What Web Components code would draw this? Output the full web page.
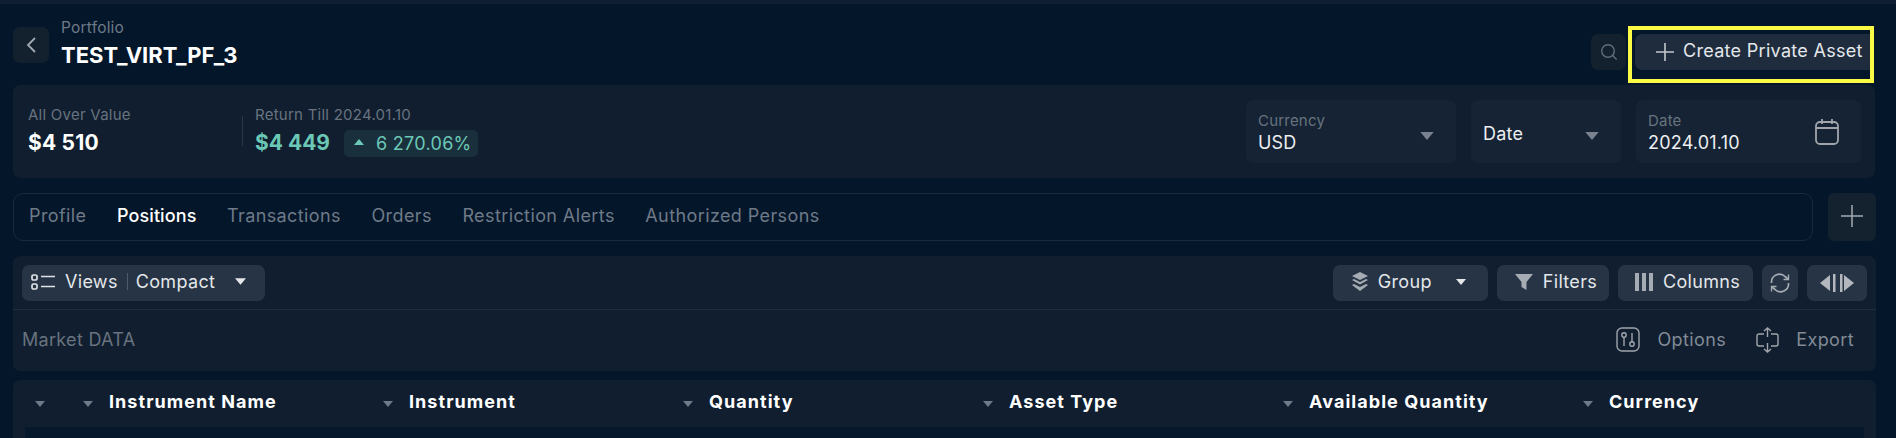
<!DOCTYPE html>
<html lang="en">
<head>
<meta charset="utf-8">
<title>Portfolio</title>
<style>
  html, body { margin: 0; background: #03162a; }
  body { font-family: "Inter", "Liberation Sans", sans-serif; color: #fff; height: 438px; overflow: hidden; }
</style>
</head>
<body>
<portfolio-page></portfolio-page>

<script>
const caret = (size = 10, color = "#6f7a88") =>
  `<svg width="${size}" height="${Math.round(size * 0.6)}" viewBox="0 0 10 6"><path d="M0 0h10L5 6z" fill="${color}"/></svg>`;

/* PAGE HEADER */
class PageHeader extends HTMLElement {
  constructor() {
    super();
    this.attachShadow({ mode: "open" }).innerHTML = `
      <style>
        :host { display: flex; justify-content: space-between; align-items: flex-start; height: 81px; padding: 0 26px 0 13px; box-sizing: border-box; }
        .left { display: flex; gap: 12px; margin-top: 23px; }
        .back { width: 36px; height: 36px; border-radius: 7px; background: #13212f; display: flex; align-items: center; justify-content: center; }
        .sub { font-size: 15.5px; line-height: 18px; color: #6f7a88; letter-spacing: .2px; margin-top: -8px; }
        .title { font-size: 22px; line-height: 26px; font-weight: 700; margin-top: 5px; }
        .right { display: flex; gap: 9px; margin-top: 30px; }
        .search { width: 35px; height: 36px; border-radius: 7px; background: #13212f; display: flex; align-items: center; justify-content: center; }
        .create { position: relative; width: 235px; height: 36px; border-radius: 7px 0 0 7px; background: #1e2c3e; display: flex; align-items: center; gap: 9px; padding: 0 0 4px 21px; box-sizing: border-box; font-size: 18px; letter-spacing: .3px; color: #e4e7ea; white-space: nowrap; }
        .create svg { margin-top: 4px; }
        .mark { position: absolute; left: -7px; right: -4px; top: -8px; bottom: -13px; border: 4px solid #fbfb45; pointer-events: none; }
      </style>
      <div class="left">
        <div class="back"><svg width="12" height="18" viewBox="0 0 12 18"><path d="M10 2 3 9l7 7" fill="none" stroke="#a3a9b1" stroke-width="1.8"/></svg></div>
        <div>
          <div class="sub"><slot name="sub"></slot></div>
          <div class="title"><slot name="title"></slot></div>
        </div>
      </div>
      <div class="right">
        <div class="search"><svg width="18" height="18" viewBox="0 0 18 18"><circle cx="8" cy="8" r="6.3" fill="none" stroke="#626d7a" stroke-width="1.4"/><path d="m12.6 12.6 4 4" stroke="#626d7a" stroke-width="1.4"/></svg></div>
        <div class="create">
          <svg width="18" height="18" viewBox="0 0 18 18"><path d="M9 0v18M0 9h18" stroke="#c3c7cc" stroke-width="1.6"/></svg>
          <slot name="action"></slot>
          <span class="mark"></span>
        </div>
      </div>`;
  }
}
customElements.define("page-header", PageHeader);

/* STATS */
class StatBar extends HTMLElement {
  constructor() {
    super();
    this.attachShadow({ mode: "open" }).innerHTML = `
      <style>
        :host { display: flex; justify-content: space-between; align-items: center; height: 93px; margin: 0 21px 0 13px; padding: 0 14px 0 15px; box-sizing: border-box; border-radius: 7px; background: #101e2f; }
        .stats, .fields { display: flex; align-items: center; }
        .fields { gap: 15px; }
      </style>
      <div class="stats"><slot></slot></div>
      <div class="fields"><slot name="fields"></slot></div>`;
  }
}
customElements.define("stat-bar", StatBar);

class StatItem extends HTMLElement {
  constructor() {
    super();
    this.attachShadow({ mode: "open" }).innerHTML = `
      <style>
        :host { display: block; box-sizing: border-box; }
        :host([divided]) { position: relative; padding-left: 13px; }
        :host([divided])::before { content: ""; position: absolute; left: 0; top: 9px; height: 30px; width: 1px; background: #2a3748; }
        .label { font-size: 15px; line-height: 20px; color: #68737f; letter-spacing: .25px; white-space: nowrap; margin-top: -2px; }
        .row { display: flex; align-items: center; gap: 14px; margin-top: 5px; height: 27px; }
        .value { font-size: 21px; font-weight: 700; letter-spacing: .2px; white-space: nowrap; margin-top: -1px; }
        :host([up]) .value { color: #6bc8b7; letter-spacing: 0; }
      </style>
      <div class="label"><slot name="label"></slot></div>
      <div class="row"><span class="value"><slot name="value"></slot></span><slot name="badge"></slot></div>`;
  }
}
customElements.define("stat-item", StatItem);

class ChangeBadge extends HTMLElement {
  constructor() {
    super();
    this.attachShadow({ mode: "open" }).innerHTML = `
      <style>
        :host { display: inline-flex; align-items: center; gap: 12px; height: 27px; padding: 0 6px 0 10px; border-radius: 5px; background: #1a2f3c; color: #6bc8b7; font-size: 18px; letter-spacing: .3px; white-space: nowrap; }
        svg { margin-top: -2px; }
      </style>
      <svg width="10" height="6" viewBox="0 0 10 6"><path d="M0 6h10L5 0z" fill="#6bc8b7"/></svg><slot></slot>`;
  }
}
customElements.define("change-badge", ChangeBadge);

class SelectField extends HTMLElement {
  constructor() {
    super();
    this.attachShadow({ mode: "open" }).innerHTML = `
      <style>
        :host { display: flex; align-items: center; justify-content: space-between; height: 63px; box-sizing: border-box; padding: 0 22px 0 12px; border-radius: 7px; background: #152334; }
        .text { display: flex; flex-direction: column; padding-top: 4px; }
        .label { font-size: 15px; line-height: 19px; color: #68737f; letter-spacing: .2px; margin-top: -2px; margin-bottom: 2px; }
        .label:empty { display: none; }
        .value { font-size: 18px; line-height: 22px; color: #eceef0; letter-spacing: .2px; }
        .tail { display: block; margin-top: 5px; }
        ::slotted(svg) { display: block; margin-top: -5px; }
      </style>
      <div class="text"><div class="label"></div><div class="value"><slot></slot></div></div>
      <div class="tail"><slot name="icon">${caret(14, "#79828e")}</slot></div>`;
    this.shadowRoot.querySelector(".label").textContent = this.getAttribute("label") || "";
    this.style.width = this.getAttribute("w") + "px";
  }
}
customElements.define("select-field", SelectField);

/* TABS */
class TabBar extends HTMLElement {
  constructor() {
    super();
    this.attachShadow({ mode: "open" }).innerHTML = `
      <style>
        :host { display: flex; gap: 15px; height: 48px; margin: 15px 20px 0 13px; }
        .tabs { flex: 1; display: flex; align-items: center; gap: 30.5px; padding: 0 0 4px 15px; border: 1px solid #1b2a3b; border-radius: 10px; }
        .add { width: 48px; height: 48px; padding-bottom: 2px; box-sizing: border-box; border-radius: 6px; background: #14222f; display: flex; align-items: center; justify-content: center; }
      </style>
      <div class="tabs"><slot></slot></div>
      <div class="add"><svg width="22" height="22" viewBox="0 0 22 22"><path d="M11 0v22M0 11h22" stroke="#a3a9b1" stroke-width="1.5"/></svg></div>`;
  }
}
customElements.define("tab-bar", TabBar);

class TabItem extends HTMLElement {
  constructor() {
    super();
    this.attachShadow({ mode: "open" }).innerHTML = `
      <style>
        :host { display: block; font-size: 18px; color: #6f7a88; letter-spacing: .4px; white-space: nowrap; }
        :host([active]) { color: #fff; font-weight: 500; letter-spacing: .1px; }
      </style><slot></slot>`;
  }
}
customElements.define("tab-item", TabItem);

/* TOOLBAR */
class ToolPanel extends HTMLElement {
  constructor() {
    super();
    this.attachShadow({ mode: "open" }).innerHTML = `
      <style>
        :host { display: block; margin: 15px 20px 0 13px; height: 115px; border-radius: 7px; background: #101e2f; }
        .top { display: flex; justify-content: space-between; align-items: center; height: 54px; padding: 0 9px; box-sizing: border-box; border-bottom: 1px solid #1f2d3e; }
        .bottom { display: flex; justify-content: space-between; align-items: center; height: 61px; padding: 0 22px 2px 9px; box-sizing: border-box; font-size: 18px; color: #68737f; letter-spacing: .3px; }
        .group { display: flex; align-items: center; gap: 9px; }
        .links { display: flex; align-items: center; gap: 30px; }
      </style>
      <div class="top"><slot name="views"></slot><div class="group"><slot name="tools"></slot></div></div>
      <div class="bottom"><slot name="caption"></slot><div class="links"><slot name="links"></slot></div></div>`;
  }
}
customElements.define("tool-panel", ToolPanel);

class ToolButton extends HTMLElement {
  constructor() {
    super();
    this.attachShadow({ mode: "open" }).innerHTML = `
      <style>
        :host { display: inline-flex; align-items: center; gap: 10px; height: 36px; box-sizing: border-box; padding: 0 12px 2px 18px; border-radius: 7px; background: #263445; color: #e4e7ea; font-size: 18px; letter-spacing: .3px; white-space: nowrap; }
        :host([icon-only]) { padding: 0; justify-content: center; }
      </style><slot></slot>`;
  }
}
customElements.define("tool-button", ToolButton);

class LinkButton extends HTMLElement {
  constructor() {
    super();
    this.attachShadow({ mode: "open" }).innerHTML = `
      <style>
        :host { display: inline-flex; align-items: center; gap: 17px; font-size: 18px; color: #818a95; letter-spacing: .4px; white-space: nowrap; }
      </style><slot></slot>`;
  }
}
customElements.define("link-button", LinkButton);

/* TABLE */
class TableHead extends HTMLElement {
  constructor() {
    super();
    this.attachShadow({ mode: "open" }).innerHTML = `
      <style>
        :host { display: block; margin: 9px 20px 0 13px; height: 60px; border-radius: 7px 7px 0 0; background: #101e2f; padding: 0 12px; box-sizing: border-box; }
        .row { display: grid; grid-template-columns: 48px 300px 300px 300px 300px 300px 1fr; align-items: center; height: 47px; box-sizing: border-box; padding-bottom: 5px; }
        .body { height: 13px; background: #06182c; }
      </style>
      <div class="row"><slot></slot></div>
      <div class="body"></div>`;
  }
}
customElements.define("table-head", TableHead);

class HeadCell extends HTMLElement {
  constructor() {
    super();
    this.attachShadow({ mode: "open" }).innerHTML = `
      <style>
        :host { display: flex; align-items: center; gap: 16px; padding-left: 10px; font-size: 18px; font-weight: 700; letter-spacing: 1.05px; white-space: nowrap; }
        svg { margin-top: 5px; }
      </style>${caret(10)}<slot></slot>`;
  }
}
customElements.define("head-cell", HeadCell);

/* PAGE */
class PortfolioPage extends HTMLElement {
  constructor() {
    super();
    this.attachShadow({ mode: "open" }).innerHTML = `
      <style>
        :host { display: block; }
        .strip { height: 4px; background: #0f1e30; }
        svg { display: block; flex: none; }
        .sep { display: inline-block; width: 1px; height: 17px; background: #4e5a69; margin: 0 -2px 0 -1px; }
      </style>
      <div class="strip"></div>

      <page-header>
        <span slot="sub">Portfolio</span>
        <span slot="title">TEST_VIRT_PF_3</span>
        <span slot="action">Create Private Asset</span>
      </page-header>

      <stat-bar>
        <stat-item style="width:214px">
          <span slot="label">All Over Value</span>
          <span slot="value">$4 510</span>
        </stat-item>
        <stat-item divided up>
          <span slot="label">Return Till 2024.01.10</span>
          <span slot="value">$4 449</span>
          <change-badge slot="badge">6 270.06%</change-badge>
        </stat-item>
        <select-field slot="fields" label="Currency" w="210">USD</select-field>
        <select-field slot="fields" w="150">Date</select-field>
        <select-field slot="fields" label="Date" w="225">2024.01.10
          <svg slot="icon" width="24" height="26" viewBox="0 0 24 26" fill="none" stroke="#a0a5ac" stroke-width="1.8"><rect x="1" y="3" width="22" height="22" rx="4"/><path d="M1 9h22M7 0v5M17 0v5"/></svg>
        </select-field>
      </stat-bar>

      <tab-bar>
        <tab-item>Profile</tab-item>
        <tab-item active>Positions</tab-item>
        <tab-item>Transactions</tab-item>
        <tab-item>Orders</tab-item>
        <tab-item>Restriction Alerts</tab-item>
        <tab-item>Authorized Persons</tab-item>
      </tab-bar>

      <tool-panel>
        <tool-button slot="views" style="padding-left:9px;width:243px">
          <svg width="24" height="16" viewBox="0 0 24 16" fill="none" stroke="#dfe2e5" stroke-width="1.7"><rect x="1" y="1" width="5" height="5" rx="1.6"/><rect x="1" y="10" width="5" height="5" rx="1.6"/><path d="M10 2.500h14M10 12.500h14"/></svg>
          <span>Views</span><span class="sep"></span><span style="letter-spacing:.35px">Compact</span>
          <span style="margin-left:10px">${caret(11, "#e4e7ea")}</span>
        </tool-button>

        <tool-button slot="tools" style="width:155px;padding-left:19px">
          <svg width="16" height="20" viewBox="0 0 16 20" fill="#a6acb3"><path d="M8 0l8 4-8 4-8-4z"/><path d="M0 8l2-1 6 3 6-3 2 1-8 4.500z"/><path d="M0 13l2-1 6 3 6-3 2 1-8 6z"/></svg>
          <span>Group</span>
          <span style="margin-left:14px">${caret(10, "#e4e7ea")}</span>
        </tool-button>
        <tool-button slot="tools">
          <svg width="18" height="18" viewBox="0 0 18 18" fill="#a6acb3"><path d="M0 1h18l-6.500 8v8l-5-3V9z"/></svg>
          <span>Filters</span>
        </tool-button>
        <tool-button slot="tools" style="padding-left:17px;padding-right:13px">
          <svg width="18" height="18" viewBox="0 0 18 18" fill="#a6acb3"><rect x="0" y="0" width="4" height="18"/><rect x="7" y="0" width="4" height="18"/><rect x="14" y="0" width="4" height="18"/></svg>
          <span>Columns</span>
        </tool-button>
        <tool-button slot="tools" icon-only style="width:36px">
          <svg width="20" height="20" viewBox="0 0 20 20" fill="none" stroke="#a6acb3" stroke-width="1.7"><path d="M1.500 10A8 8 0 0 1 15 3.500L18 6"/><path d="M18.500 10A8 8 0 0 1 5 16.500L2 14"/><path d="M18.500 1.500V6.500H13.500M1.500 18.500V13.500H6.500" stroke-width="1.300"/></svg>
        </tool-button>
        <tool-button slot="tools" icon-only style="width:60px">
          <svg width="40" height="18" viewBox="0 0 40 18" fill="#b4b8be"><path d="M13 1v16L3 9z"/><rect x="16" y="0" width="2.500" height="18"/><rect x="23" y="0" width="2.500" height="18"/><path d="M27 1v16l10-8z"/></svg>
        </tool-button>

        <span slot="caption">Market DATA</span>

        <link-button slot="links">
          <svg width="24" height="25" viewBox="0 0 24 25" fill="none" stroke="#a0a5ac" stroke-width="1.400"><rect x="1" y="1" width="22" height="23" rx="5"/><circle cx="8" cy="8" r="2.200"/><path d="M8 10v9"/><circle cx="16" cy="17" r="2.200"/><path d="M16 6v9"/></svg>
          Options
        </link-button>
        <link-button slot="links">
          <svg width="23" height="26" viewBox="0 0 23 26" fill="none" stroke="#a0a5ac" stroke-width="1.400"><path d="M8 7H3a2 2 0 0 0-2 2v8a2 2 0 0 0 2 2h5M15 7h5a2 2 0 0 1 2 2v8a2 2 0 0 1-2 2h-5"/><path d="M11.500 1v9M8 4l3.500-3L15 4M11.500 16v9M8 22l3.500 3 3.500-3"/></svg>
          Export
        </link-button>
      </tool-panel>

      <table-head>
        <head-cell></head-cell>
        <head-cell>Instrument Name</head-cell>
        <head-cell>Instrument</head-cell>
        <head-cell>Quantity</head-cell>
        <head-cell>Asset Type</head-cell>
        <head-cell>Available Quantity</head-cell>
        <head-cell>Currency</head-cell>
      </table-head>`;
  }
}
customElements.define("portfolio-page", PortfolioPage);
</script>
</body>
</html>
